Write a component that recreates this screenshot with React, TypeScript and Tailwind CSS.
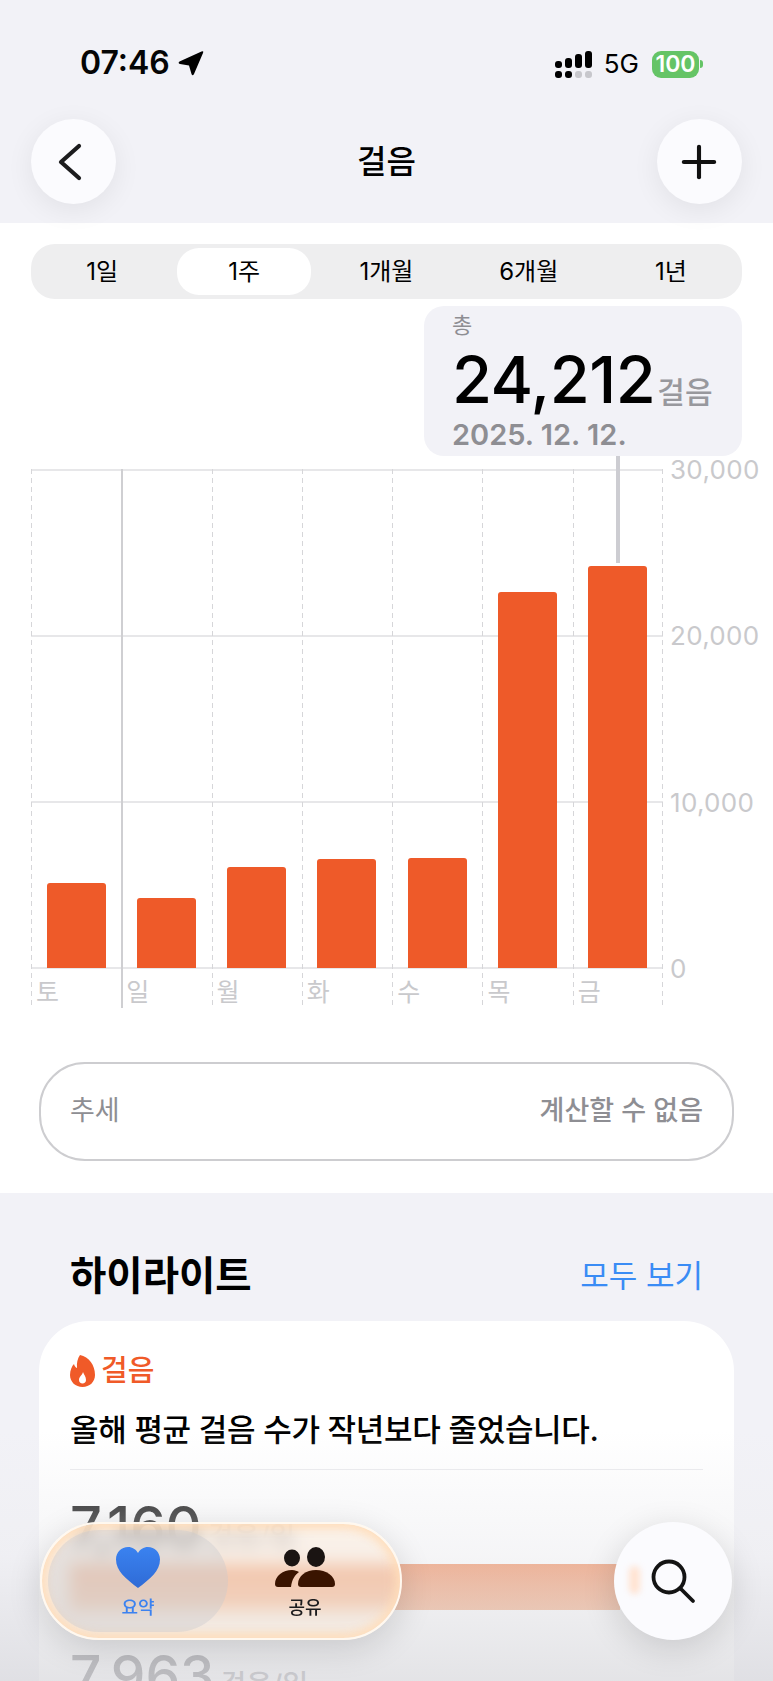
import { Plus } from "lucide-react";

const ranges = ["1일", "1주", "1개월", "6개월", "1년"];

const days = [
  { label: "토", height: 85 },
  { label: "일", height: 70 },
  { label: "월", height: 101 },
  { label: "화", height: 109 },
  { label: "수", height: 110 },
  { label: "목", height: 376 },
  { label: "금", height: 402 },
];

const ticks = ["30,000", "20,000", "10,000", "0"];

function StatusBar() {
  return (
    <div className="flex h-[119px] items-start justify-between pl-[80px] pr-[70px] pt-[44px]">
      <div className="flex items-center gap-[8px]">
        <span className="text-[32px] leading-[38px] font-semibold text-[#050505]">07:46</span>
        <svg width="26" height="26" viewBox="0 0 26 26">
          <path d="M23.5 1.5 Q26 0.5 25 3 L16 24 Q14.5 26.5 13.5 24 L11 15.5 L2 14 Q-0.5 13 1.5 11.5 Z" fill="#000" />
        </svg>
      </div>
      <div className="flex items-center pt-[5px]">
        <svg width="37" height="27" viewBox="0 0 37 27">
          <rect x="0" y="10" width="7" height="7" rx="3" fill="#000" />
          <rect x="10" y="7" width="7" height="10" rx="3" fill="#000" />
          <rect x="20" y="3" width="7" height="14" rx="3" fill="#000" />
          <rect x="30" y="0" width="7" height="17" rx="3" fill="#000" />
          <rect x="0" y="20" width="7" height="7" rx="3" fill="#000" />
          <rect x="10" y="20" width="7" height="7" rx="3" fill="#000" />
          <rect x="20" y="20" width="7" height="7" rx="3" fill="#c7c7cc" />
          <rect x="30" y="20" width="7" height="7" rx="3" fill="#c7c7cc" />
        </svg>
        <span className="ml-[12px] text-[26px] leading-[30px] font-normal text-black">5G</span>
        <div className="ml-[13px] flex h-[27px] w-[47px] items-center justify-center rounded-[9px] bg-[#65c466] text-[23px] leading-none font-semibold text-white">
          100
        </div>
        <div className="ml-[1px] h-[8px] w-[3px] rounded-r-[3px] bg-[#65c466]" />
      </div>
    </div>
  );
}

function RoundButton({ children }: { children: React.ReactNode }) {
  return (
    <button
      type="button"
      className="flex h-[85px] w-[85px] items-center justify-center rounded-full bg-[#fbfbfe] text-[#111] shadow-[0_6px_28px_rgba(0,0,0,0.07)]"
    >
      {children}
    </button>
  );
}

function Chart() {
  return (
    <div className="relative mt-[13px] flex pl-[31px]">
      <div className="relative h-[539px] w-[632px]">
        {/* horizontal grid */}
        <div className="absolute inset-x-0 top-0 flex h-[500px] flex-col justify-between">
          {ticks.map((t) => (
            <div key={t} className="h-[1.5px] bg-[#e7e7e9]" />
          ))}
        </div>
        <div className="relative grid h-full grid-cols-7">
          {days.map((d, i) => (
            <div key={d.label} className="relative flex flex-col">
              <div
                className={
                  i === 1
                    ? "absolute inset-y-0 left-0 w-[1.5px] bg-[#cfcfd2]"
                    : "absolute inset-y-0 left-0 w-px bg-[repeating-linear-gradient(to_bottom,#d6d6d9_0,#d6d6d9_5px,transparent_5px,transparent_9px)]"
                }
              />
              <div className="relative flex h-[499px] items-end justify-center">
                <div className="w-[59px] rounded-t-[3px] bg-[#ee5a29]" style={{ height: d.height }} />
              </div>
              <span className="mt-[8px] pl-[5px] text-[25px] leading-[32px] text-[#c9c9cc]">{d.label}</span>
            </div>
          ))}
          <div className="absolute inset-y-0 right-0 w-px bg-[repeating-linear-gradient(to_bottom,#d6d6d9_0,#d6d6d9_5px,transparent_5px,transparent_9px)]" />
        </div>
        {/* selected bar marker */}
        <div className="absolute left-[585px] top-[-13px] h-[107px] w-[4px] bg-[#cdcdd2]" />
      </div>
      <div className="flex h-[500px] flex-col justify-between pl-[7px] pt-[1px]">
        {ticks.map((t) => (
          <span key={t} className="h-0 text-[26px] leading-[0] font-normal tracking-[0.3px] text-[#c9c9cc]">
            {t}
          </span>
        ))}
      </div>
    </div>
  );
}

function FlameIcon() {
  return (
    <svg width="25" height="32" viewBox="0 0 25 32">
      <path
        d="M10 0 C19 2 25 10 25 20 C25 27 19.5 32 12.5 32 C5.5 32 0 27 0 20 C0 15 2 11 4 9 C4.5 11 5.5 12.5 7 13 C6.5 8 7.5 3.5 10 0 Z M13 17 C12.5 20 9 21.5 9 25 C9 27 10.5 28.5 12.5 28.5 C14.5 28.5 16 27 16 25 C16 21.5 14 20 13 17 Z"
        fill="#f05a28"
        fillRule="evenodd"
      />
    </svg>
  );
}

function TabBar() {
  return (
    <div className="absolute inset-x-0 bottom-[41px] flex items-start justify-between pl-[40px] pr-[41px]">
      <div className="relative flex h-[118px] w-[362px] overflow-hidden rounded-full border-[2px] border-[#fff8ef] bg-[#ffe6cb]/35 p-[6px] shadow-[0_8px_34px_rgba(0,0,0,0.14),inset_0_0_10px_5px_rgba(255,221,186,0.95)] backdrop-blur-[8px]">
        <div className="flex w-[180px] flex-col items-center rounded-full bg-[#c8c8cc]/40 pt-[17px]">
          <svg width="44" height="41" viewBox="0 0 44 41">
            <defs>
              <linearGradient id="heartFill" x1="0" y1="0" x2="0" y2="1">
                <stop offset="0" stopColor="#3a82f0" />
                <stop offset="1" stopColor="#2f6bd6" />
              </linearGradient>
            </defs>
            <path
              d="M22 41 C10 32 0 24 0 12.5 C0 5 5.5 0 12 0 C16.5 0 20 2.5 22 6 C24 2.5 27.5 0 32 0 C38.5 0 44 5 44 12.5 C44 24 34 32 22 41 Z"
              fill="url(#heartFill)"
            />
          </svg>
          <span className="mt-[8px] text-[18px] leading-[24px] font-medium text-[#3b82f0]">요약</span>
        </div>
        <div className="flex w-[154px] flex-col items-center pt-[17px]">
          <svg width="60" height="41" viewBox="0 0 60 41">
            <ellipse cx="17" cy="11" rx="8" ry="8.5" fill="#1a1412" />
            <ellipse cx="41" cy="10" rx="9" ry="10" fill="#1a1412" />
            <path d="M0 37 C0 29 8 23 17 23 C20 23 22 24 24 25 C20 28 17 32 16 40 L3 40 Q0 40 0 37 Z" fill="#3a1400" />
            <path d="M23 37 C23 29 31 23 41 23 C51 23 60 29 60 37 Q60 40 57 40 L26 40 Q23 40 23 37 Z" fill="#3a1400" />
          </svg>
          <span className="mt-[8px] text-[18px] leading-[24px] font-medium text-[#1c1c1e]">공유</span>
        </div>
      </div>
      <button
        type="button"
        className="relative flex h-[118px] w-[118px] items-center justify-center rounded-full bg-[#fbfbfe] shadow-[0_8px_34px_rgba(0,0,0,0.14)]"
      >
        <div className="absolute left-[15px] top-[44px] h-[28px] w-[11px] rounded-full bg-[#ffe3d2] blur-[3px]" />
        <svg width="46" height="46" viewBox="0 0 46 46" fill="none" stroke="#141414" strokeWidth="3.8" strokeLinecap="round">
          <circle cx="19" cy="19" r="15.5" />
          <path d="M31 31 L43 43" />
        </svg>
      </button>
    </div>
  );
}

export default function App() {
  return (
    <div className="relative h-[1681px] w-[773px] overflow-hidden bg-[#f2f2f7] font-[Inter,'Noto_Sans_CJK_KR',sans-serif] text-black">
      <header className="relative z-10 h-[223px]">
        <StatusBar />
        <div className="flex items-center justify-between px-[31px]">
          <RoundButton>
            <svg width="24" height="38" viewBox="0 0 24 38" fill="none" stroke="#1c1c1e" strokeWidth="4.2" strokeLinecap="round" strokeLinejoin="round" className="mr-[8px]">
              <path d="M21 3 L3 19 L21 35" />
            </svg>
          </RoundButton>
          <h1 className="text-[32px] leading-[40px] font-medium">걸음</h1>
          <RoundButton>
            <Plus size={52} strokeWidth={1.9} />
          </RoundButton>
        </div>
      </header>

      <section className="h-[970px] bg-white pt-[21px]">
        <div className="mx-[31px] grid h-[55px] grid-cols-5 rounded-[24px] bg-[#eeeeef]">
          {ranges.map((r) => (
            <div
              key={r}
              className={
                r === "1주"
                  ? "m-[4px] flex items-center justify-center rounded-[22px] bg-white text-[24px] font-normal"
                  : "flex items-center justify-center text-[24px] font-normal"
              }
            >
              {r}
            </div>
          ))}
        </div>

        <div className="ml-[424px] mt-[7px] h-[150px] w-[318px] rounded-[20px] bg-[#f2f2f7] pl-[28px] pt-[6px]">
          <div className="text-[22px] leading-[26px] font-normal text-[#8e8e93]">총</div>
          <div className="mt-[4px] flex items-baseline">
            <span className="text-[65px] leading-[76px] font-medium tracking-[-0.5px]">24,212</span>
            <span className="ml-[2px] text-[30px] leading-[34px] font-medium text-[#98989d]">걸음</span>
          </div>
          <div className="text-[29px] leading-[34px] font-semibold text-[#8e8e93]">2025. 12. 12.</div>
        </div>

        <Chart />

        <div className="mx-[39px] mt-[54px] flex h-[99px] items-center justify-between rounded-[46px] border-[2px] border-[#cdcdd0] px-[29px] text-[27px] font-medium text-[#8e8e93]">
          <span className="font-normal">추세</span>
          <span>계산할 수 없음</span>
        </div>
      </section>

      <section className="px-[39px]">
        <div className="flex h-[128px] items-center justify-between px-[31px] pt-[38px]">
          <h2 className="text-[39.5px] leading-[48px] font-bold">하이라이트</h2>
          <span className="text-[31px] leading-[40px] font-normal text-[#3a8cf5]">모두 보기</span>
        </div>
        <div className="rounded-[50px] bg-white px-[31px] pt-[33px] pb-[40px]">
          <div className="flex items-center gap-[6px]">
            <FlameIcon />
            <span className="text-[29px] leading-[34px] font-medium text-[#f05a28]">걸음</span>
          </div>
          <p className="mt-[20px] text-[31px] leading-[44px] font-medium tracking-[-0.3px]">
            올해 평균 걸음 수가 작년보다 줄었습니다.
          </p>
          <div className="mt-[17px] h-px bg-[#e9e9ec]" />
          <div className="mt-[27px] flex items-baseline">
            <span className="text-[56px] leading-[60px] font-medium">7,160</span>
            <span className="ml-[6px] text-[28px] font-medium text-[#8e8e93]">걸음/일</span>
          </div>
          <div className="mt-[6px] h-[46px] w-[550px] bg-gradient-to-b from-[#ee6e30] to-[#f39a68]" />
          <div className="mt-[35px] flex items-baseline">
            <span className="text-[55px] leading-[60px] font-medium text-[#7c7c80]">7,963</span>
            <span className="ml-[6px] text-[28px] font-medium text-[#a5a5a9]">걸음/일</span>
          </div>
        </div>
      </section>

      {/* fade behind the floating tab bar */}
      <div className="pointer-events-none absolute inset-x-0 bottom-0 h-[250px] bg-gradient-to-b from-white/0 via-[#ededf0]/55 to-[#d8d8dc]/70" />
      <TabBar />
    </div>
  );
}
